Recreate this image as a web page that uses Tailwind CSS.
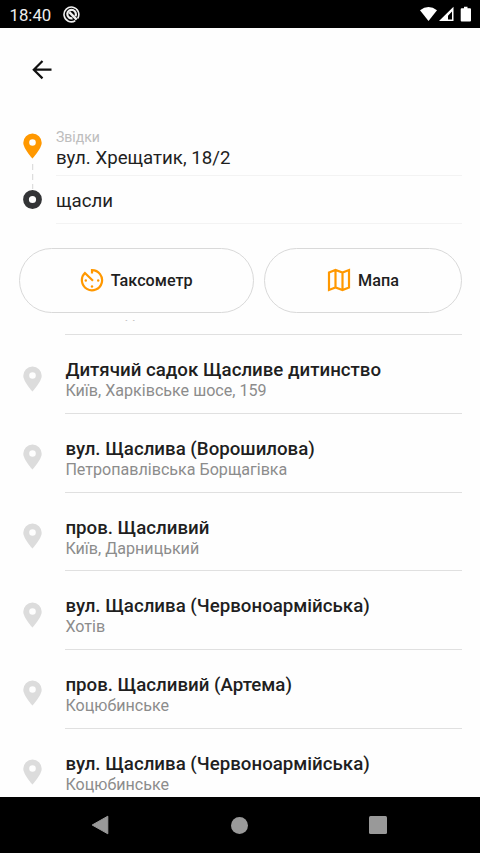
<!DOCTYPE html>
<html lang="uk">
<head>
<meta charset="utf-8">
<title>Пошук адреси</title>
<script src="https://cdn.jsdelivr.net/npm/@tailwindcss/browser@4"></script>
</head>
<body class="w-[480px] h-[853px] overflow-hidden bg-[#fefefe] flex flex-col font-[Roboto,sans-serif] text-[#1f1f1f]">
<svg class="hidden">
  <symbol id="pin" viewBox="0 0 19 26"><path fill="currentColor" fill-rule="evenodd" d="M9.500 .5A9.200 9.200 0 0 0 .3 9.700C.3 15.500 9.500 25.500 9.500 25.500S18.700 15.500 18.700 9.700A9.200 9.200 0 0 0 9.500 .5ZM9.500 6.200a3.300 3.300 0 1 1 0 6.600a3.300 3.300 0 0 1 0-6.600Z"/></symbol>
</svg>

<header class="h-[27.500px] shrink-0 bg-black text-white flex items-center pl-[9.500px] pr-[8px]">
  <span class="text-[16.800px] leading-[20px] mt-[2px] w-[53.500px] text-[#eee]">18:40</span>
  <svg class="w-[17px] h-[17px] mt-[1px]" viewBox="0 0 17 17" fill="none" stroke="#f0f0f0"><path stroke-width="1.600" d="M14.600 12.500A7.400 7.400 0 1 0 12.200 14.800"/><path stroke-width="2.200" d="M12.300 10.300A4.300 4.300 0 1 0 9.500 12.300"/><path stroke-width="2.400" d="M6.300 6.100l7.400 7.500"/></svg>
  <svg class="ml-auto w-[52px] h-[17px] mt-[1px]" viewBox="0 0 52 17" fill="#fff"><path d="M0 4.200Q8.500-2.400 17 4.200L8.500 15Z"/><path fill-rule="evenodd" d="M33.500 .8V15H19ZM32 5.500L28 9.700V13.500H32Z"/><path d="M44 .8h3.500V2.200H50a1 1 0 0 1 1 1V14.500a1 1 0 0 1-1 1h-8.300a1 1 0 0 1-1-1V3.200a1 1 0 0 1 1-1H44Z"/></svg>
</header>

<main class="flex-1 min-h-0 flex flex-col">
  <div class="h-[84px] shrink-0 pt-[32.500px] pl-[32px]">
    <svg class="w-[20px] h-[20px]" viewBox="0 0 20 20" fill="none" stroke="#111" stroke-width="2.200"><path d="M19.500 9.700H2M10.500 1L1.800 9.700l8.700 8.700"/></svg>
  </div>

  <section class="h-[136px] shrink-0 flex pl-[23px] pr-[18px]">
    <div class="w-[19px] mr-[14px] flex flex-col items-center pt-[21.500px]">
      <svg class="w-[19px] h-[26px] shrink-0 text-[#ff9800]"><use href="#pin"/></svg>
      <svg class="w-[2px] h-[30px] shrink-0" viewBox="0 0 2 30"><path d="M.5 5V30" stroke="#ddd" stroke-width="1.500" stroke-dasharray="6 4"/></svg>
      <svg class="w-[19px] h-[19px] shrink-0 mt-[.5px]" viewBox="0 0 19 19"><circle cx="9.500" cy="9.500" r="6.500" fill="none" stroke="#333436" stroke-width="5.800"/></svg>
    </div>
    <div class="flex-1">
      <div class="h-[64.500px] pt-[17.500px] border-b border-[#f3f3f3]">
        <div class="text-[14px] leading-[16px] text-[#bdbdbd]">Звідки</div>
        <div class="text-[18.700px] leading-[22px] mt-[2px]">вул. Хрещатик, 18/2</div>
      </div>
      <div class="h-[48px] pt-[13.500px] border-b border-[#f3f3f3] text-[18.700px] leading-[22px]">щасли</div>
    </div>
  </section>

  <div class="shrink-0 h-[73px] flex gap-[9.500px] pl-[18.500px] pr-[18px]">
    <button class="w-[235.500px] h-[65.500px] rounded-full border border-[#d9d9d9] flex items-center justify-center text-[16.200px] font-medium">
      <svg class="w-[24px] h-[24px] mr-[7px]" viewBox="0 0 24 24" fill="none" stroke="#ff9800" stroke-width="2.200"><path d="M12 5.500V2.100A10.100 10.100 0 1 1 4.900 5L13 12.800"/><g fill="#ff9800" stroke="none"><circle cx="5.800" cy="12.500" r="1.200"/><circle cx="18.200" cy="12.500" r="1.200"/><circle cx="12" cy="18.500" r="1.200"/></g></svg>
      <span class="pt-[2px]">Таксометр</span>
    </button>
    <button class="flex-1 h-[65.500px] rounded-full border border-[#d9d9d9] flex items-center justify-center text-[16.200px] font-medium">
      <svg class="w-[24px] h-[24px] mr-[7.500px]" viewBox="0 0 24 24" fill="none" stroke="#ff9800" stroke-width="2.200"><path d="M2 4.500L8.500 2l7 2.500L22 2V19.500L15.500 22l-7-2.500L2 22ZM8.500 2V19.500M15.500 4.500V22"/></svg>
      <span class="pt-[2px]">Мапа</span>
    </button>
  </div>

  <div class="flex-1 min-h-0 overflow-hidden -mt-[1px]">
    <ul id="list" class="-mt-[62.800px]"></ul>
  </div>
</main>

<nav class="h-[56px] shrink-0 bg-black flex items-center justify-between pl-[91px] pr-[93px]">
  <svg class="w-[18px] h-[20px]" viewBox="0 0 18 20"><path d="M16.800 1.200V18.800L1.200 10Z" fill="#999" stroke="#999" stroke-linejoin="round"/></svg>
  <div class="w-[17px] h-[17px] rounded-full bg-[#999] ml-[1px]"></div>
  <div class="w-[18px] h-[18px] rounded-[1.500px] bg-[#999]"></div>
</nav>

<template id="row">
  <li class="h-[78.650px] flex pl-[23px] pr-[18.500px]">
    <svg class="w-[19px] h-[26px] mt-[30.500px] mr-[23.400px] text-[#dcdcdc] shrink-0"><use href="#pin"/></svg>
    <div class="flex-1 pt-[24px] border-b-[1.500px] border-[#e0e0e0] whitespace-nowrap">
      <div class="title text-[18.700px] leading-[22px] font-medium"></div>
      <div class="sub text-[16.100px] leading-[19px] text-[#8c8c8c]"></div>
    </div>
  </li>
</template>
<script>
const rows = [
  ["Щасливе", "Київ, Подільський"],
  ["Дитячий садок Щасливе дитинство", "Київ, Харківське шосе, 159"],
  ["вул. Щаслива (Ворошилова)", "Петропавлівська Борщагівка"],
  ["пров. Щасливий", "Київ, Дарницький"],
  ["вул. Щаслива (Червоноармійська)", "Хотів"],
  ["пров. Щасливий (Артема)", "Коцюбинське"],
  ["вул. Щаслива (Червоноармійська)", "Коцюбинське"]
];
const list = document.getElementById("list");
const tpl = document.getElementById("row");
rows.forEach(([title, sub]) => {
  const n = tpl.content.cloneNode(true);
  n.querySelector(".title").textContent = title;
  n.querySelector(".sub").textContent = sub;
  list.appendChild(n);
});
</script>
</body>
</html>
